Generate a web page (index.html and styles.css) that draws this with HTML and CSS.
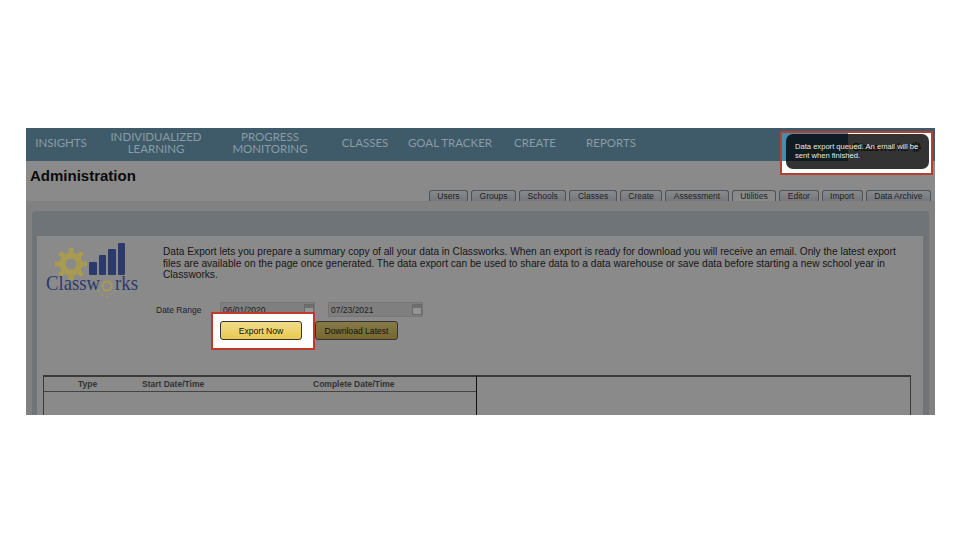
FILE: index.html
```html
<!DOCTYPE html>
<html lang="en">
<head>
<meta charset="utf-8">
<title>Classworks Administration</title>
<link rel="stylesheet" href="styles.css">
</head>
<body>
<div class="frame">
  <nav class="nav">
    <a class="nav-item w-insights">INSIGHTS</a>
    <a class="nav-item w-indiv">INDIVIDUALIZED<br>LEARNING</a>
    <a class="nav-item w-progress">PROGRESS<br>MONITORING</a>
    <a class="nav-item w-classes">CLASSES</a>
    <a class="nav-item w-goal">GOAL TRACKER</a>
    <a class="nav-item w-create">CREATE</a>
    <a class="nav-item w-reports">REPORTS</a>
  </nav>
  <div class="head">
    <h1 class="title">Administration</h1>
    <div class="tabs">
      <span class="tab">Users</span>
      <span class="tab">Groups</span>
      <span class="tab">Schools</span>
      <span class="tab">Classes</span>
      <span class="tab">Create</span>
      <span class="tab">Assessment</span>
      <span class="tab tab-active">Utilities</span>
      <span class="tab">Editor</span>
      <span class="tab">Import</span>
      <span class="tab">Data Archive</span>
    </div>
  </div>
  <div class="band">
    <div class="panel">
      <div class="panel-body">
        <div class="intro">
          <svg class="logo" viewBox="0 0 96 58" aria-hidden="true">
            <g fill="#a89a50">
              <circle cx="27" cy="23" r="11.500"/>
              <path stroke="#a89a50" stroke-width="5" d="M27 7v32M11 23h32M15.700 11.700l22.600 22.600M38.300 11.700L15.700 34.300"/>
            </g>
            <circle cx="27" cy="23" r="5.500" fill="#8a8a8a"/>
            <g fill="#2c3a6b">
              <rect x="45" y="21" width="8" height="13" rx="1"/>
              <rect x="55" y="14" width="7" height="20" rx="1"/>
              <rect x="64" y="8" width="8" height="26" rx="1"/>
              <rect x="74" y="2" width="7" height="32" rx="1"/>
            </g>
            <g fill="none" stroke="#a89a50">
              <circle cx="63" cy="45" r="4.500" stroke-width="2"/>
              <path d="M53 49l2 1M58 53l1 1M63 55v2M68 53l-1 1M73 49l-2 1" stroke-width="1.500"/>
            </g>
            <text class="logo-text" x="2" y="49" textLength="54" lengthAdjust="spacingAndGlyphs">Classw</text>
            <text class="logo-text" x="71" y="49" textLength="23" lengthAdjust="spacingAndGlyphs">rks</text>
          </svg>
          <p class="desc">Data Export lets you prepare a summary copy of all your data in Classworks. When an export is ready for download you will receive an email. Only the latest export files are available on the page once generated. The data export can be used to share data to a data warehouse or save data before starting a new school year in Classworks.</p>
        </div>
        <div class="dates">
          <span class="date-label">Date Range</span>
          <span class="date-field"><span>06/01/2020</span><i class="cal"></i></span>
          <span class="date-field"><span>07/23/2021</span><i class="cal"></i></span>
        </div>
        <div class="actions">
          <span class="btn-slot"></span>
          <button class="btn btn-dim">Download Latest</button>
        </div>
        <div class="tables">
          <div class="table-left">
            <div class="thead">
              <span class="th th-type">Type</span>
              <span class="th th-start">Start Date/Time</span>
              <span class="th th-end">Complete Date/Time</span>
            </div>
          </div>
          <div class="table-right"></div>
        </div>
      </div>
    </div>
  </div>
  <div class="highlight-btn">
    <button class="btn btn-primary">Export Now</button>
  </div>
  <div class="highlight-toast">
    <div class="lit-nav">
      <span class="lit-blue"></span>
      <span class="brand">Classworks</span>
      <svg class="brand-gear" viewBox="0 0 12 12" aria-hidden="true"><circle cx="6" cy="6" r="3.500" fill="none" stroke="#6a5c20" stroke-width="3" stroke-dasharray="2 1"/></svg>
    </div>
    <div class="toast">Data export queued. An email will be sent when finished.</div>
  </div>
</div>
</body>
</html>
```
FILE: styles.css
```css
* { box-sizing: border-box; }
html, body { margin: 0; background: #fff; }
body { padding: 128px 25px 0 26px; height: 540px; overflow: hidden; font-family: "Liberation Sans", Arial, sans-serif; }
.frame { position: relative; width: 909px; height: 287px; background: #8a8a8a; overflow: hidden; }

.nav { display: flex; height: 33px; padding-bottom: 3px; background: #3f5b69; align-items: center; }
.nav-item { display: block; font-family: Lato, sans-serif; font-size: 11.500px; line-height: 12.500px; color: #8a9ca6; text-align: center; flex: none; white-space: nowrap; }
.w-insights { width: 70px; }
.w-indiv { width: 120px; }
.w-progress { width: 108px; }
.w-classes { width: 82px; }
.w-goal { width: 88px; }
.w-create { width: 82px; }
.w-reports { width: 70px; }

.head { position: relative; height: 40px; }
.title { margin: 0; padding: 6px 0 0 4px; font-size: 15px; line-height: 18px; font-weight: bold; color: #0b0b0b; }
.tabs { position: absolute; right: 4px; bottom: 0; display: flex; gap: 3px; }
.tab { height: 11px; padding: 0 7.550px; font-size: 8.500px; line-height: 11px; color: #1f1f1f; background: linear-gradient(#888b8e, #74777b); border: 1px solid #4f5256; border-bottom: 0; border-radius: 3px 3px 0 0; }
.tab-active { background: #8a8a8a; }

.band { height: 214px; background: #818181; padding: 10px 6px 0 6px; }
.panel { height: 100%; background: #6f7478; border-radius: 3px 3px 0 0; padding: 25px 6px 0 5px; }
.panel-body { height: 300px; background: #8a8a8a; padding: 5px 12px 0 6px; }
.intro { display: flex; }
.logo { width: 96px; height: 58px; flex: none; margin: 0 23px 0 1px; }
.logo-text { font-family: "Liberation Serif", serif; font-size: 21px; fill: #2c3a6b; }
.desc { width: 742px; margin: 0; padding-top: 5px; font-size: 10.170px; line-height: 11.500px; color: #161616; }
.dates { display: flex; align-items: center; margin: 3px 0 0 113px; font-size: 8.500px; color: #222; }
.date-label { width: 64px; }
.date-field { display: flex; justify-content: space-between; align-items: center; width: 95px; height: 15px; margin-right: 13px; padding: 0 0 0 2px; background: #7f7f7f; border: 1px solid #767676; font-size: 8.500px; }
.cal { width: 10px; height: 11px; background: linear-gradient(#6f6f6f 3px, #949494 3px); border: 1px solid #6a6a6a; }
.actions { display: flex; gap: 13px; margin: 4px 0 0 177px; }
.btn-slot { width: 82px; height: 19px; }
.btn { display: block; width: 82px; height: 19px; padding: 0; font-family: "Liberation Sans", Arial, sans-serif; font-size: 8.600px; color: #111; border: 1px solid #333; border-radius: 3px; }
.btn-primary { background: linear-gradient(#f0dc8c, #eac94e); }
.btn-dim { width: 83px; background: linear-gradient(#857a48, #77672e); }
.tables { display: flex; margin-top: 35px; }
.table-left { width: 434px; height: 80px; border: 1px solid #3a3a3a; border-top-width: 2px; border-right: 1px solid #111; }
.table-right { width: 435px; height: 80px; border: 1px solid #3a3a3a; border-top-width: 2px; border-left: 0; }
.thead { position: relative; height: 15px; border-bottom: 1px solid #444; font-size: 8.500px; font-weight: bold; color: #333; }
.th { position: absolute; top: 2px; }
.th-type { left: 34px; }
.th-start { left: 98px; }
.th-end { left: 269px; }

.highlight-btn { position: absolute; left: 185px; top: 184px; width: 104px; height: 38px; padding: 7px 0 0 7px; background: #fff; border: 2px solid #c0392b; }
.highlight-toast { position: absolute; left: 754px; top: 3px; width: 153px; height: 44px; background: #fff; border: 2px solid #b5402f; }
.lit-nav { display: flex; align-items: center; height: 28px; }
.lit-blue { width: 66px; height: 100%; background: #4a8bad; }
.brand { margin-left: 4px; font-size: 11px; color: #111; }
.brand-gear { width: 12px; height: 12px; margin-left: 2px; }
.toast { position: absolute; left: 4px; top: 1px; width: 143px; height: 35px; padding: 8px 8px 0 9px; background: rgba(0, 0, 0, .8); border-radius: 7px; font-size: 7.600px; line-height: 9px; color: #e8e8e8; }
```
